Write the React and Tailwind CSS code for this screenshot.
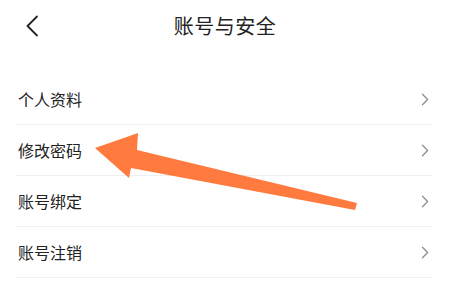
import React from 'react';

const items = ['个人资料', '修改密码', '账号绑定', '账号注销'];

function Chevron() {
    return (
        <svg width="8" height="13" viewBox="0 0 8 13" fill="none" className="shrink-0">
            <path d="M1.5 1.2 L6.6 6.5 L1.5 11.8" stroke="#8e8e8e" strokeWidth="1.3" strokeLinecap="round" strokeLinejoin="round" />
        </svg>
    );
}

export default function App() {
    return (
        <div
            className="relative w-[450px] h-[298px] bg-white overflow-hidden text-[#222]"
            style={{ fontFamily: '"Noto Sans CJK SC", "Noto Sans", sans-serif' }}
        >
            {/* 导航栏 */}
            <div className="relative h-[52px] flex items-center justify-center">
                <svg width="14" height="22" viewBox="0 0 14 22" fill="none" className="absolute left-[25px] top-[15px]">
                    <path d="M12 1.5 L2.5 11 L12 20.5" stroke="#222" strokeWidth="1.8" strokeLinecap="round" strokeLinejoin="round" />
                </svg>
                <div className="text-[20px] leading-none tracking-[0.5px]">账号与安全</div>
            </div>

            {/* 列表 */}
            <div className="mt-[22px] ml-4 mr-[18px]">
                {items.map((t) => (
                    <div key={t} className="h-[51px] flex items-center justify-between border-b border-[#efefef] pl-[2px] pr-[3px]">
                        <span className="text-[16px] leading-none">{t}</span>
                        <Chevron />
                    </div>
                ))}
            </div>

            {/* 箭头标注 */}
            <svg className="absolute left-0 top-0 pointer-events-none" width="450" height="298" viewBox="0 0 450 298">
                <polygon
                    points="95,148 138,133 137,150 357,203 355,210 131,168 129,178"
                    fill="#ff7a3e"
                    strokeLinejoin="round"
                />
            </svg>
        </div>
    );
}
